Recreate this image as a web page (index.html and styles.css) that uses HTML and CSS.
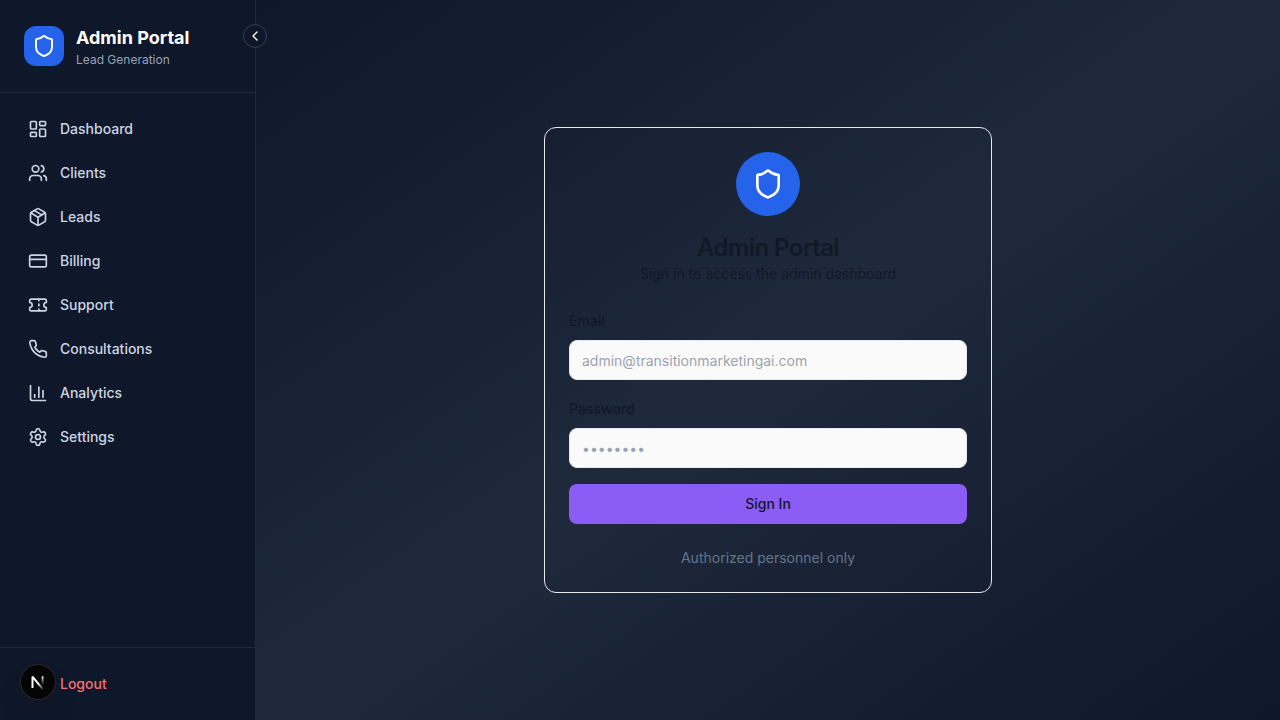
FILE: index.html
```html
<!DOCTYPE html>
<html lang="en">
<head>
<meta charset="utf-8">
<meta name="viewport" content="width=device-width, initial-scale=1">
<title>Admin Portal</title>
<link rel="stylesheet" href="styles.css">
</head>
<body>
<div class="app">
  <aside class="sidebar">
    <header class="brand">
      <span class="brand-mark">
        <svg class="icon icon-md" viewBox="0 0 24 24"><path d="M20 13c0 5-3.5 7.5-7.66 8.95a1 1 0 0 1-.67-.01C7.5 20.5 4 18 4 13V6a1 1 0 0 1 1-1c2 0 4.500-1.200 6.240-2.720a1.170 1.170 0 0 1 1.520 0C14.510 3.810 17 5 19 5a1 1 0 0 1 1 1z"/></svg>
      </span>
      <div>
        <div class="brand-name">Admin Portal</div>
        <div class="brand-sub">Lead Generation</div>
      </div>
    </header>
    <button class="collapse" type="button" aria-label="Collapse sidebar">
      <svg class="icon icon-xs" viewBox="0 0 24 24"><path d="m15 18-6-6 6-6"/></svg>
    </button>
    <nav class="nav">
      <a class="nav-item" href="#">
        <svg class="icon" viewBox="0 0 24 24"><rect width="7" height="9" x="3" y="3" rx="1"/><rect width="7" height="5" x="14" y="3" rx="1"/><rect width="7" height="9" x="14" y="12" rx="1"/><rect width="7" height="5" x="3" y="16" rx="1"/></svg>
        Dashboard
      </a>
      <a class="nav-item" href="#">
        <svg class="icon" viewBox="0 0 24 24"><path d="M16 21v-2a4 4 0 0 0-4-4H6a4 4 0 0 0-4 4v2"/><circle cx="9" cy="7" r="4"/><path d="M22 21v-2a4 4 0 0 0-3-3.870"/><path d="M16 3.130a4 4 0 0 1 0 7.750"/></svg>
        Clients
      </a>
      <a class="nav-item" href="#">
        <svg class="icon" viewBox="0 0 24 24"><path d="M11 21.730a2 2 0 0 0 2 0l7-4A2 2 0 0 0 21 16V8a2 2 0 0 0-1-1.730l-7-4a2 2 0 0 0-2 0l-7 4A2 2 0 0 0 3 8v8a2 2 0 0 0 1 1.730z"/><path d="M12 22V12"/><path d="m3.300 7 7.703 4.734a2 2 0 0 0 1.994 0L20.700 7"/><path d="m7.500 4.270 9 5.150"/></svg>
        Leads
      </a>
      <a class="nav-item" href="#">
        <svg class="icon" viewBox="0 0 24 24"><rect width="20" height="14" x="2" y="5" rx="2"/><path d="M2 10h20"/></svg>
        Billing
      </a>
      <a class="nav-item" href="#">
        <svg class="icon" viewBox="0 0 24 24"><path d="M2 9a3 3 0 0 1 0 6v2a2 2 0 0 0 2 2h16a2 2 0 0 0 2-2v-2a3 3 0 0 1 0-6V7a2 2 0 0 0-2-2H4a2 2 0 0 0-2 2Z"/><path d="M13 5v2"/><path d="M13 17v2"/><path d="M13 11v2"/></svg>
        Support
      </a>
      <a class="nav-item" href="#">
        <svg class="icon" viewBox="0 0 24 24"><path d="M22 16.920v3a2 2 0 0 1-2.180 2 19.790 19.790 0 0 1-8.630-3.070 19.500 19.500 0 0 1-6-6 19.790 19.790 0 0 1-3.070-8.670A2 2 0 0 1 4.110 2h3a2 2 0 0 1 2 1.720 12.840 12.840 0 0 0 .7 2.810 2 2 0 0 1-.45 2.110L8.090 9.910a16 16 0 0 0 6 6l1.270-1.270a2 2 0 0 1 2.110-.45 12.840 12.840 0 0 0 2.810.7A2 2 0 0 1 22 16.920z"/></svg>
        Consultations
      </a>
      <a class="nav-item" href="#">
        <svg class="icon" viewBox="0 0 24 24"><path d="M3 3v16a2 2 0 0 0 2 2h16"/><path d="M18 17V9"/><path d="M13 17V5"/><path d="M8 17v-3"/></svg>
        Analytics
      </a>
      <a class="nav-item" href="#">
        <svg class="icon" viewBox="0 0 24 24"><path d="M9.671 4.136a2.340 2.340 0 0 1 4.659 0 2.340 2.340 0 0 0 3.319 1.915 2.340 2.340 0 0 1 2.330 4.033 2.340 2.340 0 0 0 0 3.831 2.340 2.340 0 0 1-2.330 4.033 2.340 2.340 0 0 0-3.319 1.915 2.340 2.340 0 0 1-4.659 0 2.340 2.340 0 0 0-3.320-1.915 2.340 2.340 0 0 1-2.330-4.033 2.340 2.340 0 0 0 0-3.831A2.340 2.340 0 0 1 6.350 6.051a2.340 2.340 0 0 0 3.319-1.915"/><circle cx="12" cy="12" r="3"/></svg>
        Settings
      </a>
    </nav>
    <footer class="sidebar-foot">
      <button class="nav-item logout" type="button">
        <svg class="icon" viewBox="0 0 24 24"><path d="m16 17 5-5-5-5"/><path d="M21 12H9"/><path d="M9 21H5a2 2 0 0 1-2-2V5a2 2 0 0 1 2-2h4"/></svg>
        Logout
      </button>
    </footer>
  </aside>

  <main class="main">
    <form class="card">
      <span class="card-mark">
        <svg class="icon icon-lg" viewBox="0 0 24 24"><path d="M20 13c0 5-3.5 7.5-7.66 8.95a1 1 0 0 1-.67-.01C7.5 20.5 4 18 4 13V6a1 1 0 0 1 1-1c2 0 4.500-1.200 6.240-2.720a1.170 1.170 0 0 1 1.520 0C14.510 3.810 17 5 19 5a1 1 0 0 1 1 1z"/></svg>
      </span>
      <h1 class="card-title">Admin Portal</h1>
      <p class="card-sub">Sign in to access the admin dashboard</p>
      <div class="fields">
        <div class="field">
          <div class="field-head"><label for="email">Email</label></div>
          <input id="email" type="email" placeholder="admin@transitionmarketingai.com">
        </div>
        <div class="field">
          <div class="field-head"><label for="password">Password</label></div>
          <input id="password" type="password" placeholder="••••••••">
        </div>
        <button class="submit" type="submit">Sign In</button>
      </div>
      <p class="note">Authorized personnel only</p>
    </form>
  </main>
</div>

<button class="dev-badge" type="button" aria-label="Open developer tools">
  <svg width="36" height="36" viewBox="0 0 36 36" fill="none">
    <defs>
      <linearGradient id="diag" x1="19" y1="19" x2="24" y2="25" gradientUnits="userSpaceOnUse"><stop stop-color="#fff"/><stop offset="1" stop-color="#fff" stop-opacity="0"/></linearGradient>
      <linearGradient id="stem" x1="0" y1="12" x2="0" y2="21" gradientUnits="userSpaceOnUse"><stop stop-color="#fff"/><stop offset="1" stop-color="#fff" stop-opacity="0"/></linearGradient>
    </defs>
    <path d="M12.500 24V12.700L22.800 25.200" stroke="url(#diag)" stroke-width="2" stroke-linejoin="bevel"/>
    <path d="M22.600 12.300V21.500" stroke="url(#stem)" stroke-width="1.800"/>
  </svg>
</button>
</body>
</html>
```
FILE: styles.css
```css
*, *::before, *::after { box-sizing: border-box; }

body {
  margin: 0;
  font-family: Inter, "Liberation Sans", sans-serif;
  font-size: 14px;
  line-height: 20px;
  color: #111827;
  background: #0f172a;
}

h1, p { margin: 0; }
button, input { font: inherit; }
button { cursor: pointer; }

.app { display: flex; min-height: 100vh; }

.icon {
  width: 20px;
  height: 20px;
  flex-shrink: 0;
  fill: none;
  stroke: currentColor;
  stroke-width: 2;
  stroke-linecap: round;
  stroke-linejoin: round;
}
.icon-xs { width: 16px; height: 16px; }
.icon-md { width: 24px; height: 24px; }
.icon-lg { width: 32px; height: 32px; }

/* Sidebar */
.sidebar {
  position: relative;
  display: flex;
  flex-direction: column;
  flex-shrink: 0;
  width: 256px;
  background: #0f172a;
  border-right: 1px solid #1e293b;
}
.brand {
  display: flex;
  align-items: center;
  gap: 12px;
  padding: 24px;
  border-bottom: 1px solid #1e293b;
}
.brand-mark {
  display: grid;
  place-items: center;
  width: 40px;
  height: 40px;
  border-radius: 12px;
  background: #2563eb;
  color: #fff;
}
.brand-name { font-size: 18px; line-height: 28px; font-weight: 700; color: #fff; }
.brand-sub { font-size: 12px; line-height: 16px; color: #94a3b8; }

.collapse {
  position: absolute;
  top: 24px;
  right: -12px;
  display: grid;
  place-items: center;
  width: 24px;
  height: 24px;
  padding: 0;
  border: 1px solid #334155;
  border-radius: 50%;
  background: #0f172a;
  color: #fff;
}

.nav { display: flex; flex-direction: column; flex: 1; gap: 4px; padding: 16px; }
.nav-item {
  display: flex;
  align-items: center;
  gap: 12px;
  padding: 10px 12px;
  border-radius: 8px;
  font-weight: 500;
  color: #cbd5e1;
  text-decoration: none;
}
.nav-item:hover { background: #1e293b; }
.sidebar-foot { padding: 16px; border-top: 1px solid #1e293b; }
.logout { width: 100%; border: 0; background: none; color: #f87171; }

/* Sign-in */
.main {
  display: grid;
  place-items: center;
  flex: 1;
  padding: 16px;
  background: linear-gradient(to bottom right, #0f172a, #1e293b, #0f172a);
}
.card {
  display: flex;
  flex-direction: column;
  width: 100%;
  max-width: 448px;
  padding: 24px;
  border: 1px solid #e5e7eb;
  border-radius: 12px;
  text-align: center;
}
.card-mark {
  display: grid;
  place-items: center;
  align-self: center;
  width: 64px;
  height: 64px;
  margin-bottom: 16px;
  border-radius: 50%;
  background: #2563eb;
  color: #fff;
}
.card-title { font-size: 24px; line-height: 32px; font-weight: 600; letter-spacing: -0.025em; }
.fields { display: flex; flex-direction: column; gap: 16px; margin: 24px 0; }
.field { display: flex; flex-direction: column; gap: 8px; text-align: left; }
.field-head { font-size: 16px; line-height: 24px; }
.field label { font-size: 14px; line-height: 14px; font-weight: 500; }
.field input {
  width: 100%;
  height: 40px;
  padding: 8px 12px;
  border: 1px solid #e5e7eb;
  border-radius: 8px;
  background: #fafafa;
  color: #111827;
  line-height: normal;
}
.field input::placeholder { color: #9ca3af; opacity: 1; }
.submit {
  height: 40px;
  border: 0;
  border-radius: 8px;
  background: #8b5cf6;
  color: #111827;
  font-weight: 500;
}
.note { color: #64748b; }

.dev-badge {
  position: fixed;
  left: 20px;
  bottom: 20px;
  width: 36px;
  height: 36px;
  padding: 0;
  border: 0;
  border-radius: 50%;
  background: #050506;
  box-shadow: inset 0 0 0 1px #2b2a2c, 0 16px 32px -8px rgba(0, 0, 0, 0.24);
}
.dev-badge svg { display: block; }
```
